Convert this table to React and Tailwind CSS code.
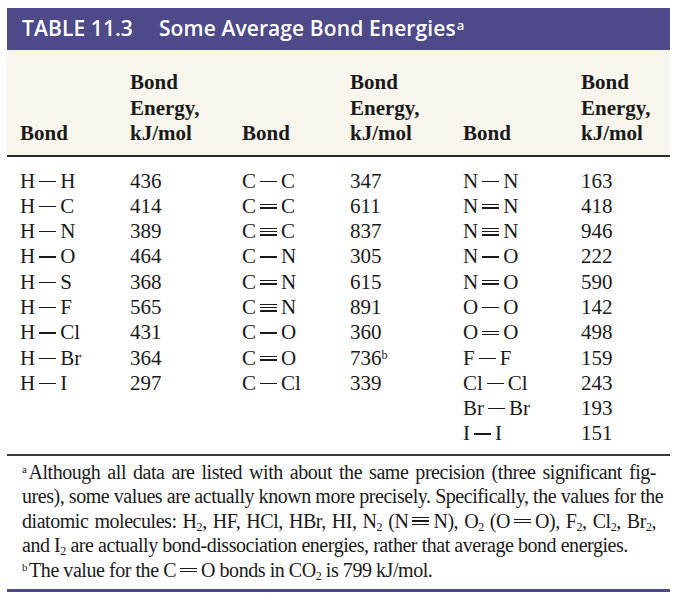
import React from 'react'

const PURPLE = 'bg-[#4e4989]'

// bond drawn as 1, 2 or 3 stacked strokes between two atoms
function Bond({ a, b, n = 1 }) {
  return (
    <span className="inline-flex items-center">
      <span>{a}</span>
      <span className="mx-[4px] flex w-[17px] flex-col gap-[2px]">
        {Array.from({ length: n }).map((_, i) => (
          <span key={i} className="block h-[1.3px] bg-[#1a1a1a]" />
        ))}
      </span>
      <span>{b}</span>
    </span>
  )
}

const COLS = [
  [
    ['H', 'H', 1, '436'], ['H', 'C', 1, '414'], ['H', 'N', 1, '389'], ['H', 'O', 1, '464'],
    ['H', 'S', 1, '368'], ['H', 'F', 1, '565'], ['H', 'Cl', 1, '431'], ['H', 'Br', 1, '364'],
    ['H', 'I', 1, '297'],
  ],
  [
    ['C', 'C', 1, '347'], ['C', 'C', 2, '611'], ['C', 'C', 3, '837'], ['C', 'N', 1, '305'],
    ['C', 'N', 2, '615'], ['C', 'N', 3, '891'], ['C', 'O', 1, '360'], ['C', 'O', 2, '736', 'b'],
    ['C', 'Cl', 1, '339'],
  ],
  [
    ['N', 'N', 1, '163'], ['N', 'N', 2, '418'], ['N', 'N', 3, '946'], ['N', 'O', 1, '222'],
    ['N', 'O', 2, '590'], ['O', 'O', 1, '142'], ['O', 'O', 2, '498'], ['F', 'F', 1, '159'],
    ['Cl', 'Cl', 1, '243'], ['Br', 'Br', 1, '193'], ['I', 'I', 1, '151'],
  ],
]

function HeadCells() {
  return (
    <>
      <div className="flex items-end">Bond</div>
      <div>Bond<br />Energy,<br />kJ/mol</div>
    </>
  )
}

export default function App() {
  const rows = Array.from({ length: 11 })
  return (
    <div className="min-h-[600px] w-[678px] bg-white pt-[8px] font-['Liberation_Serif',serif] text-[#1a1a1a]">
      <div className="mx-[7px] w-[663px]">
        {/* title bar */}
        <div className={`${PURPLE} flex h-[42px] items-center gap-[26px] pl-[15px] font-['Open_Sans',sans-serif] text-[21px] font-semibold tracking-[0.1px] text-white`}>
          <span>TABLE 11.3</span>
          <span>
            Some Average Bond Energies<sup className="ml-[1px] text-[13px]">a</sup>
          </span>
        </div>

        {/* column heads */}
        <div className="grid grid-cols-[110px_112px_108px_113px_118px_1fr] border-b-2 border-[#2a2a2a] bg-[#f8f5ec] pl-[13px] pb-[8px] pt-[20px] text-[21px] font-bold leading-[25.5px]">
          <HeadCells />
          <HeadCells />
          <HeadCells />
        </div>

        {/* data */}
        <div className="grid grid-cols-[110px_112px_108px_113px_118px_1fr] border-b-2 border-[#3a3a3a] pl-[13px] pb-[7px] pt-[12px] text-[21px] leading-[25.3px]">
          {rows.map((_, r) => (
            <React.Fragment key={r}>
              {COLS.map((col, c) => {
                const d = col[r]
                return (
                  <React.Fragment key={c}>
                    <div>{d ? <Bond a={d[0]} b={d[1]} n={d[2]} /> : null}</div>
                    <div>
                      {d ? d[3] : null}
                      {d && d[4] ? <sup className="text-[12px]">{d[4]}</sup> : null}
                    </div>
                  </React.Fragment>
                )
              })}
            </React.Fragment>
          ))}
        </div>

        {/* footnotes */}
        <div className="border-b-[3px] border-[#4e4989] pl-[15px] pr-[14px] pb-[7px] pt-[4px] text-[20px] leading-[24.5px] tracking-[-0.45px]">
          <div className="whitespace-nowrap [text-align-last:justify]">
            <sup className="mr-[2px] text-[11px]">a</sup>Although all data are listed with about the same precision (three significant fig-
          </div>
          <div className="whitespace-nowrap [text-align-last:justify]">
            ures), some values are actually known more precisely. Specifically, the values for the
          </div>
          <div className="whitespace-nowrap [text-align-last:justify]">
            diatomic molecules: H<sub className="text-[12px]">2</sub>, HF, HCl, HBr, HI, N<sub className="text-[12px]">2</sub> (<Bond a="N" b="N" n={3} />), O<sub className="text-[12px]">2</sub> (<Bond a="O" b="O" n={2} />), F<sub className="text-[12px]">2</sub>, Cl<sub className="text-[12px]">2</sub>, Br<sub className="text-[12px]">2</sub>,
          </div>
          <div className="whitespace-nowrap">
            and I<sub className="text-[12px]">2</sub> are actually bond-dissociation energies, rather that average bond energies.
          </div>
          <div className="whitespace-nowrap">
            <sup className="mr-[2px] text-[11px]">b</sup>The value for the <Bond a="C" b="O" n={2} /> bonds in CO<sub className="text-[12px]">2</sub> is 799 kJ/mol.
          </div>
        </div>
      </div>
    </div>
  )
}
